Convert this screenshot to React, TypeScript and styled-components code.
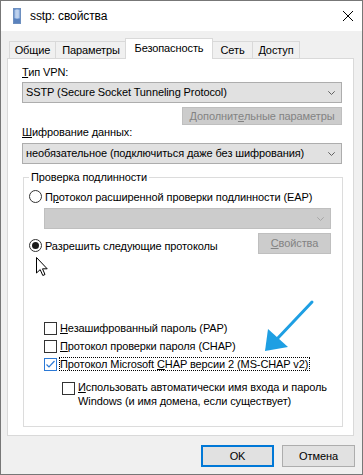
import React from "react";
import styled, { createGlobalStyle } from "styled-components";

const Global = createGlobalStyle`
  html, body { margin: 0; padding: 0; background: #f0f0f0; }
  body {
    font-family: "Liberation Sans", Arial, sans-serif;
    font-size: 11px;
    letter-spacing: -0.1px;
    color: #000;
  }
  * { box-sizing: border-box; }
`;

const Window = styled.div`
  position: relative;
  width: 363px;
  height: 475px;
  border: 1px solid #777777;
  background: #f0f0f0;
  display: flex;
  flex-direction: column;
  overflow: hidden;
`;

const TitleBar = styled.div`
  height: 30px;
  flex: none;
  background: #ffffff;
  display: flex;
  align-items: center;
  justify-content: space-between;
  padding: 0 9px 0 12px;
`;

const TitleLeft = styled.div`
  display: flex;
  align-items: center;
`;

const TitleText = styled.span`
  font-size: 12px;
  letter-spacing: -0.1px;
  line-height: 15px;
  margin-left: 9px;
`;

const Body = styled.div`
  flex: 1;
  display: flex;
  flex-direction: column;
  padding-top: 7px;
`;

const TabStrip = styled.div`
  display: flex;
  align-items: flex-start;
  height: 21px;
  margin: 0 0 -1px 8px;
`;

const Tab = styled.div<{ $w: number; $ml: number; $active?: boolean }>`
  width: ${(p) => p.$w}px;
  margin-left: ${(p) => p.$ml}px;
  height: ${(p) => (p.$active ? 21 : 17)}px;
  margin-top: ${(p) => (p.$active ? 0 : 3)}px;
  padding-top: ${(p) => (p.$active ? 2 : 1)}px;
  background: ${(p) => (p.$active ? "#ffffff" : "#f0f0f0")};
  border: 1px solid #d9d9d9;
  border-bottom: none;
  text-align: center;
  line-height: 15px;
  position: relative;
  z-index: ${(p) => (p.$active ? 2 : 1)};
  white-space: nowrap;
`;

const Panel = styled.div`
  margin-left: 6px;
  width: 347px;
  background: #ffffff;
  border: 1px solid #d9d9d9;
  padding: 6px 11px 8px 14px;
  display: flex;
  flex-direction: column;
`;

const Label = styled.div<{ $mt?: number }>`
  line-height: 15px;
  margin-top: ${(p) => p.$mt ?? 0}px;
  white-space: nowrap;
`;

const Key = styled.span`
  text-decoration: underline;
  text-underline-offset: 1px;
`;

const Combo = styled.div<{ $mt?: number; $disabled?: boolean; $w?: number; $ml?: number }>`
  width: ${(p) => (p.$w ? `${p.$w}px` : "100%")};
  height: 21px;
  margin-top: ${(p) => p.$mt ?? 0}px;
  margin-left: ${(p) => p.$ml ?? 0}px;
  background: ${(p) => (p.$disabled ? "#cccccc" : "#e1e1e1")};
  border: 1px solid ${(p) => (p.$disabled ? "#bfbfbf" : "#adadad")};
  display: flex;
  align-items: center;
  justify-content: space-between;
  padding: 0 6px 0 3px;
  line-height: 15px;
  white-space: nowrap;
`;

const Chevron = ({ color }: { color: string }) => (
  <svg width="7" height="4" viewBox="0 0 7 4" style={{ flex: "none" }}>
    <polyline points="0.3,0.3 3.5,3.5 6.7,0.3" fill="none" stroke={color} strokeWidth="1" />
  </svg>
);

const RightRow = styled.div<{ $mt?: number }>`
  display: flex;
  justify-content: flex-end;
  margin-top: ${(p) => p.$mt ?? 0}px;
`;

const Button = styled.div<{ $w: number; $h: number; $disabled?: boolean; $default?: boolean }>`
  width: ${(p) => p.$w}px;
  height: ${(p) => p.$h}px;
  flex: none;
  display: flex;
  align-items: center;
  justify-content: center;
  line-height: 15px;
  white-space: nowrap;
  background: ${(p) => (p.$disabled ? "#cccccc" : "#e1e1e1")};
  color: ${(p) => (p.$disabled ? "#838383" : "#000000")};
  border: ${(p) =>
    p.$default ? "2px solid #0078d7" : p.$disabled ? "1px solid #bfbfbf" : "1px solid #adadad"};
`;

const Group = styled.fieldset`
  margin: 6px 0 0 1px;
  width: 320px;
  min-width: 0;
  padding: 0 11px 18px 5px;
  border: 1px solid #dcdcdc;
  display: flex;
  flex-direction: column;
`;

const Legend = styled.legend`
  padding: 0 2px;
  margin-left: 0;
  line-height: 15px;
`;

const RadioRow = styled.div<{ $mt?: number }>`
  display: flex;
  align-items: center;
  height: 15px;
  margin-top: ${(p) => p.$mt ?? 0}px;
  white-space: nowrap;
`;

const SplitRow = styled.div<{ $mt?: number }>`
  display: flex;
  justify-content: space-between;
  align-items: flex-start;
  margin-top: ${(p) => p.$mt ?? 0}px;
`;

const RadioLabel = styled.div`
  display: flex;
  align-items: center;
  height: 15px;
  margin-top: 5px;
  white-space: nowrap;
`;

const Radio = styled.span<{ $checked?: boolean }>`
  width: 13px;
  height: 13px;
  flex: none;
  border: 1px solid #333333;
  border-radius: 50%;
  background: #ffffff;
  margin-right: 3px;
  display: flex;
  align-items: center;
  justify-content: center;
  &::after {
    content: "";
    display: ${(p) => (p.$checked ? "block" : "none")};
    width: 7px;
    height: 7px;
    border-radius: 50%;
    background: #1a1a1a;
  }
`;

const CheckRow = styled.div<{ $mt?: number; $ml?: number }>`
  display: flex;
  align-items: center;
  height: 18px;
  margin-top: ${(p) => p.$mt ?? 0}px;
  margin-left: ${(p) => p.$ml ?? 15}px;
  white-space: nowrap;
  line-height: 15px;
`;

const Box = styled.span<{ $checked?: boolean; $mr?: number }>`
  width: 13px;
  height: 13px;
  flex: none;
  border: 1px solid ${(p) => (p.$checked ? "#2b79d6" : "#333333")};
  background: #ffffff;
  margin-right: ${(p) => p.$mr ?? 3}px;
  display: flex;
  align-items: center;
  justify-content: center;
`;

const Focus = styled.span`
  border: 1px dotted #000000;
  line-height: 12px;
  padding: 0 1px 0 0;
`;

const SubRow = styled.div`
  display: flex;
  align-items: flex-start;
  margin: 7px 0 0 33px;
  line-height: 14px;
  & > ${Box} {
    margin-top: 2px;
  }
`;

const Footer = styled.div`
  display: flex;
  justify-content: flex-end;
  gap: 8px;
  margin-top: 9px;
  padding-right: 7px;
`;

const Overlay = styled.svg<{ $x: number; $y: number }>`
  position: absolute;
  left: ${(p) => p.$x}px;
  top: ${(p) => p.$y}px;
  overflow: visible;
  pointer-events: none;
`;

const TitleIcon = () => (
  <svg width="8" height="16" viewBox="0 0 8 16">
    <defs>
      <linearGradient id="ig" x1="0" y1="0" x2="1" y2="0">
        <stop offset="0" stopColor="#4a78bd" />
        <stop offset="0.5" stopColor="#9dbbe4" />
        <stop offset="1" stopColor="#5d88c6" />
      </linearGradient>
    </defs>
    <rect x="0.5" y="0.5" width="7" height="15" fill="url(#ig)" stroke="#6d8fbf" />
    <line x1="1.5" y1="3" x2="6.5" y2="3" stroke="#e8f0fb" />
    <line x1="1.5" y1="5" x2="6.5" y2="5" stroke="#e8f0fb" />
    <line x1="1.5" y1="7" x2="6.5" y2="7" stroke="#e8f0fb" />
    <line x1="1.5" y1="9" x2="6.5" y2="9" stroke="#e8f0fb" />
    <rect x="1" y="11" width="6" height="4" fill="#5a82bd" />
  </svg>
);

const CloseIcon = () => (
  <svg width="10" height="10" viewBox="0 0 10 10">
    <line x1="0" y1="0" x2="10" y2="10" stroke="#000" strokeWidth="1" />
    <line x1="10" y1="0" x2="0" y2="10" stroke="#000" strokeWidth="1" />
  </svg>
);

const CheckMark = () => (
  <svg width="11" height="11" viewBox="0 0 11 11">
    <polyline points="1.5,5.5 4,8 9.5,2" fill="none" stroke="#2b79d6" strokeWidth="1.2" />
  </svg>
);

export default function App() {
  return (
    <>
      <Global />
      <Window>
        <TitleBar>
          <TitleLeft>
            <TitleIcon />
            <TitleText>sstp: свойства</TitleText>
          </TitleLeft>
          <CloseIcon />
        </TitleBar>
        <Body>
          <TabStrip>
            <Tab $w={47} $ml={0}>Общие</Tab>
            <Tab $w={72} $ml={-1}>Параметры</Tab>
            <Tab $w={88} $ml={-2} $active>Безопасность</Tab>
            <Tab $w={41} $ml={-1}>Сеть</Tab>
            <Tab $w={48} $ml={-1}>Доступ</Tab>
          </TabStrip>
          <Panel>
            <Label>
              <Key>Т</Key>ип VPN:
            </Label>
            <Combo $mt={2}>
              <span>SSTP (Secure Socket Tunneling Protocol)</span>
              <Chevron color="#606060" />
            </Combo>
            <RightRow $mt={4}>
              <Button $w={160} $h={18} $disabled>
                Дополнит<Key>е</Key>льные параметры
              </Button>
            </RightRow>
            <Label>
              <Key>Ш</Key>ифрование данных:
            </Label>
            <Combo $mt={3}>
              <span>необязательное (подключиться даже без шифрования)</span>
              <Chevron color="#606060" />
            </Combo>
            <Group>
              <Legend>Проверка подлинности</Legend>
              <RadioRow $mt={4}>
                <Radio />
                <span>
                  П<Key>р</Key>отокол расширенной проверки подлинности (EAP)
                </span>
              </RadioRow>
              <Combo $mt={4} $ml={15} $w={287} $disabled>
                <span />
                <Chevron color="#a6a6a6" />
              </Combo>
              <SplitRow $mt={4}>
                <RadioLabel>
                  <Radio $checked />
                  <span>
                    Разрешить сле<Key>д</Key>ующие протоколы
                  </span>
                </RadioLabel>
                <Button $w={73} $h={21} $disabled>
                  <span>
                    <Key>С</Key>войства
                  </span>
                </Button>
              </SplitRow>
              <CheckRow $mt={65}>
                <Box />
                <span>
                  <Key>Н</Key>езашифрованный пароль (PAP)
                </span>
              </CheckRow>
              <CheckRow>
                <Box />
                <span>
                  <Key>П</Key>ротокол проверки пароля (CHAP)
                </span>
              </CheckRow>
              <CheckRow>
                <Box $checked $mr={2}>
                  <CheckMark />
                </Box>
                <Focus>
                  Протокол Microsoft <Key>C</Key>HAP версии 2 (MS-CHAP v2)
                </Focus>
              </CheckRow>
              <SubRow>
                <Box />
                <span>
                  <Key>И</Key>спользовать автоматически имя входа и пароль
                  <br />
                  Windows (и имя домена, если существует)
                </span>
              </SubRow>
            </Group>
          </Panel>
          <Footer>
            <Button $w={73} $h={22} $default>
              OK
            </Button>
            <Button $w={73} $h={22}>
              Отмена
            </Button>
          </Footer>
        </Body>
        <Overlay $x={35} $y={256} width="12" height="20" viewBox="0 0 12 20">
          <path
            d="M0.5,0.5 L0.5,16 L4.2,12.6 L6.8,18.5 L9,17.5 L6.5,11.8 L11.2,11.8 Z"
            fill="#ffffff"
            stroke="#000000"
            strokeWidth="1"
            strokeLinejoin="round"
          />
        </Overlay>
        <Overlay $x={259} $y={299} width="60" height="60" viewBox="0 0 60 60">
          <line x1="52" y1="2" x2="17" y2="39" stroke="#1e9fe3" strokeWidth="3" strokeLinecap="round" />
          <polygon points="5,51 8,29 28,47" fill="#1e9fe3" />
        </Overlay>
      </Window>
    </>
  );
}
